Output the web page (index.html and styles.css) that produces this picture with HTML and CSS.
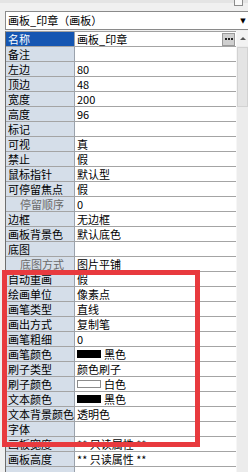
FILE: index.html
```html
<!DOCTYPE html>
<html lang="zh-CN">
<head>
  <meta charset="UTF-8" />
  <title>属性</title>
  <link rel="stylesheet" href="styles.css">
</head>
<body>
  <div class="panel">
    <div class="topbar"><span class="topbtn"></span></div>

    <div class="combo">
      <span class="combo-text">画板_印章（画板）</span>
      <span class="combo-arrow">▼</span>
    </div>

    <div class="grid-wrap">
      <div class="grid">
        <div class="row selected"><div class="name">名称</div><div class="value"><span class="val-text">画板_印章</span><span class="dots"><i></i><i></i><i></i></span></div></div>
        <div class="row"><div class="name">备注</div><div class="value"></div></div>
        <div class="row"><div class="name">左边</div><div class="value">80</div></div>
        <div class="row"><div class="name">顶边</div><div class="value">48</div></div>
        <div class="row"><div class="name">宽度</div><div class="value">200</div></div>
        <div class="row"><div class="name">高度</div><div class="value">96</div></div>
        <div class="row"><div class="name">标记</div><div class="value"></div></div>
        <div class="row"><div class="name">可视</div><div class="value">真</div></div>
        <div class="row"><div class="name">禁止</div><div class="value">假</div></div>
        <div class="row"><div class="name">鼠标指针</div><div class="value">默认型</div></div>
        <div class="row"><div class="name">可停留焦点</div><div class="value">假</div></div>
        <div class="row"><div class="name sub">停留顺序</div><div class="value">0</div></div>
        <div class="row"><div class="name">边框</div><div class="value">无边框</div></div>
        <div class="row"><div class="name">画板背景色</div><div class="value">默认底色</div></div>
        <div class="row"><div class="name">底图</div><div class="value"></div></div>
        <div class="row"><div class="name sub">底图方式</div><div class="value">图片平铺</div></div>
        <div class="row"><div class="name">自动重画</div><div class="value">假</div></div>
        <div class="row"><div class="name">绘画单位</div><div class="value">像素点</div></div>
        <div class="row"><div class="name">画笔类型</div><div class="value">直线</div></div>
        <div class="row"><div class="name">画出方式</div><div class="value">复制笔</div></div>
        <div class="row"><div class="name">画笔粗细</div><div class="value">0</div></div>
        <div class="row"><div class="name">画笔颜色</div><div class="value"><span class="swatch black"></span>黑色</div></div>
        <div class="row"><div class="name">刷子类型</div><div class="value">颜色刷子</div></div>
        <div class="row"><div class="name">刷子颜色</div><div class="value"><span class="swatch white"></span>白色</div></div>
        <div class="row"><div class="name">文本颜色</div><div class="value"><span class="swatch black"></span>黑色</div></div>
        <div class="row"><div class="name">文本背景颜色</div><div class="value">透明色</div></div>
        <div class="row"><div class="name">字体</div><div class="value"></div></div>
        <div class="row"><div class="name">画板宽度</div><div class="value">** 只读属性 **</div></div>
        <div class="row"><div class="name">画板高度</div><div class="value">** 只读属性 **</div></div>
        <div class="row"><div class="name"></div><div class="value"></div></div>
      </div>

      <div class="scrollbar">
        <div class="sb-btn"></div>
        <div class="sb-thumb"></div>
      </div>
    </div>

    <div class="mark"></div>
  </div>
</body>
</html>
```

FILE: styles.css
```css
body {
  margin: 0;
  background-color: #f0f0f0;
  font-family: "Noto Sans CJK SC", "Liberation Sans", sans-serif;
  font-size: 11px;
  color: #000;
  overflow: hidden;
}
.panel {
  position: relative;
  width: 248px;
  height: 472px;
  overflow: hidden;
}
.topbar {
  height: 10px;
  border-top: 3px solid #e4e4e4;
  box-sizing: border-box;
  position: relative;
}
.topbtn {
  position: absolute;
  right: 5px;
  top: -3px;
  width: 7px;
  height: 5px;
  border: 1px solid #8c8c8c;
  border-top: none;
  background: #fafafa;
}
.combo {
  display: flex;
  align-items: center;
  height: 19px;
  margin: 1px 0 1px 5px;
  background: #fff;
  border: 1px solid #8a8a8a;
  border-right: none;
  box-sizing: border-box;
  padding-left: 2px;
}
.combo-text {
  flex: 1;
  line-height: 17px;
}
.combo-arrow {
  font-family: "DejaVu Sans", sans-serif;
  font-size: 7px;
  width: 10px;
  text-align: center;
}
.grid-wrap {
  display: flex;
  height: 445px;
}
.grid {
  width: 231px;
  margin-left: 5px;
  border-left: 1px solid #6e6e6e;
  border-top: 1px solid #a0a0a0;
  box-sizing: border-box;
  overflow: hidden;
}
.row {
  display: grid;
  grid-template-columns: 69px minmax(0, 1fr);
  height: 15px;
  line-height: 14px;
}
.name,
.value {
  border-bottom: 1px solid #a4a4a4;
  white-space: nowrap;
  overflow: hidden;
}
.name {
  background-color: #d5dee9;
  border-right: 1px solid #9aa2ac;
  padding-left: 2px;
}
.name.sub {
  padding-left: 14px;
  color: #6a6a6a;
}
.value {
  background: #fff;
  padding-left: 2px;
  display: flex;
  align-items: center;
}
.val-text {
  flex: 1;
}
.row.selected .name {
  background-color: #1556b2;
  color: #fff;
}
.dots {
  flex: none;
  display: flex;
  align-items: center;
  justify-content: center;
  gap: 1px;
  width: 13px;
  height: 13px;
  margin-right: 1px;
  background: #cfcfcf;
  border: 1px solid #9a9a9a;
  box-sizing: border-box;
}
.dots i {
  width: 2px;
  height: 2px;
  background: #222;
}
.swatch {
  width: 24px;
  height: 8px;
  margin-right: 3px;
  box-sizing: border-box;
}
.swatch.black {
  background: #000;
}
.swatch.white {
  background: #fff;
  border: 1px solid #8c8c8c;
}
.scrollbar {
  width: 12px;
  background: #ececec;
  border-left: 1px solid #f6f6f6;
  box-sizing: border-box;
}
.sb-btn {
  height: 15px;
  background: #f2f2f2;
  display: flex;
  align-items: center;
  justify-content: center;
}
.sb-btn::before {
  content: "";
  border-left: 3px solid transparent;
  border-right: 3px solid transparent;
  border-bottom: 3px solid #555;
}
.sb-thumb {
  height: 60px;
  margin: 1px 0 0 0;
  background: #e4e4e4;
  border: 1px solid #d2d2d2;
  box-sizing: border-box;
}
.mark {
  position: absolute;
  left: 2px;
  top: 270px;
  width: 198px;
  height: 177px;
  border: 5px solid #e83a3e;
  box-sizing: border-box;
}
```
